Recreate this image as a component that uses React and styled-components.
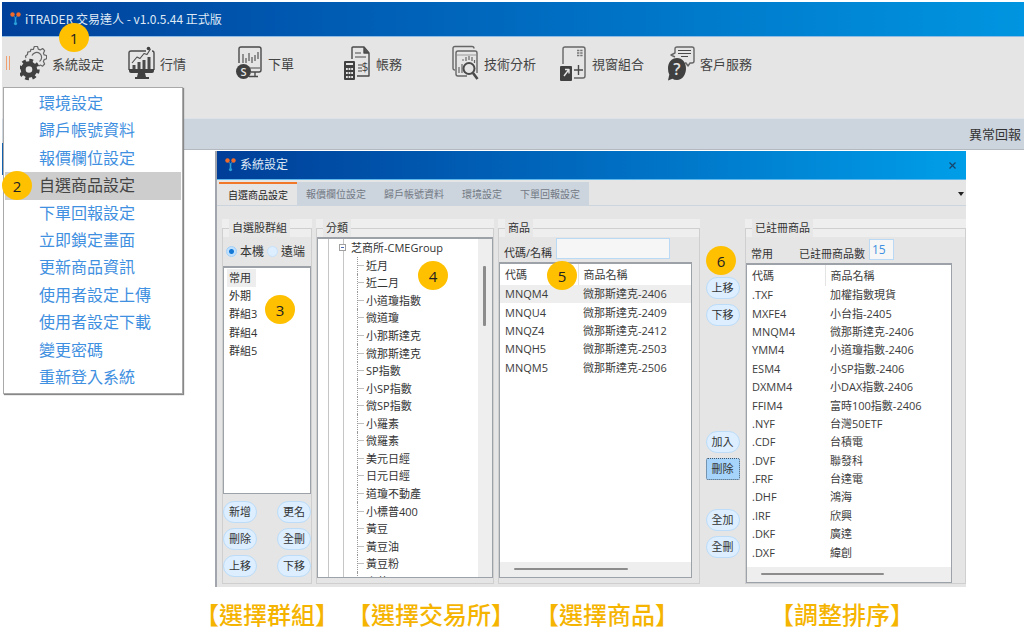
import React from "react";
import styled, { createGlobalStyle } from "styled-components";

const UI = `"Open Sans", "Noto Sans CJK TC", sans-serif`;

const GlobalStyle = createGlobalStyle`
  *, *::before, *::after { box-sizing: border-box; }
  body { margin: 0; background: #fff; color: #333; font: 11px/18px ${UI}; }
  button, input { font: inherit; color: inherit; }
  ul { list-style: none; margin: 0; padding: 0; }
`;

const Page = styled.div`
  position: relative;
  padding: 2px 0 0 2px;
`;

const TitleBar = styled.header`
  display: flex;
  align-items: center;
  gap: 3px;
  height: 35px;
  padding-left: 8px;
  background: linear-gradient(90deg, #00409a, #0066bc 45%, #0095e0);
  border-bottom: 1px solid #8fbce4;
  color: #dfe9f5;
  h1 { margin: 0; font: 400 12px/20px "Noto Sans CJK TC", sans-serif; }
`;

const Toolbar = styled.nav`
  position: relative;
  display: flex;
  height: 81px;
  padding: 8px 0 0 4px;
  background: #e5e5e5;
`;

const Grip = styled.span`
  width: 4px;
  height: 14px;
  margin: 11px 10px 0 0;
  border: solid #f0a070;
  border-width: 0 1px;
`;

const NavButton = styled.button`
  flex: 0 0 108px;
  display: flex;
  align-items: center;
  gap: 5px;
  height: 37px;
  padding: 0;
  border: 0;
  background: none;
  color: #444;
  font: 13px/20px "Noto Sans CJK TC", sans-serif;
  white-space: nowrap;
`;

const StatusBar = styled.div`
  display: flex;
  align-items: center;
  justify-content: flex-end;
  height: 32px;
  padding-right: 3px;
  background: #ccd4de;
  border-top: 1px solid #dde2e8;
  border-bottom: 1px solid #b4b9c0;
  font: 13px/20px "Noto Sans CJK TC", sans-serif;
`;

const Anchor = styled.div`
  position: relative;
`;

const Badge = styled.span`
  position: absolute;
  z-index: 5;
  left: ${(p) => p.$x}px;
  top: ${(p) => p.$y}px;
  display: grid;
  place-items: center;
  width: 30px;
  height: 29px;
  border-radius: 50%;
  background: #ffc000;
  color: #222;
  font: 15px/20px "Open Sans", sans-serif;
`;

const BackWindow = styled.div`
  position: absolute;
  left: 2px;
  top: 143px;
  width: 182px;
  height: 32px;
  background: #1260ae;
`;

const Menu = styled.ul`
  position: absolute;
  z-index: 3;
  left: 3px;
  top: 87px;
  display: grid;
  grid-auto-rows: 1fr;
  width: 180px;
  height: 307px;
  padding: 2px 1px 1px;
  background: #fff;
  border: 1px solid #a9a9a9;
  box-shadow: 1px 1px 1px #888;
`;

const MenuItem = styled.button`
  width: 100%;
  height: 100%;
  padding: 0 0 4px 34px;
  border: 0;
  text-align: left;
  font: 16px/20px "Noto Sans CJK TC", sans-serif;
  background: ${(p) => (p.$active ? "#cdcdcd" : "transparent")};
  color: ${(p) => (p.$active ? "#444" : "#3f90e0")};
`;

const Dialog = styled.section`
  margin: 1px 58px 0 213px;
  border-left: 2px solid #a2a6ac;
  background: #e5e5e5;
`;

const DialogTitle = styled.header`
  display: flex;
  align-items: center;
  gap: 3px;
  height: 29px;
  padding: 0 8px;
  background: linear-gradient(90deg, #003e98, #0070c4 55%, #009ee8);
  border-bottom: 1px solid #5db8ee;
  color: #dfe9f5;
  h2 { flex: 1; margin: 0; font: 400 12px/18px ${UI}; }
`;

const Close = styled.button`
  width: 12px;
  height: 16px;
  padding: 0;
  border: 0;
  background: none;
  color: #17466c;
  display: grid;
  place-items: center;
`;

const Tabs = styled.div`
  display: flex;
  align-items: stretch;
  height: 26px;
  padding: 2px 0 0 2px;
  border-bottom: 1px solid #ccd4de;
`;

const Tab = styled.button`
  flex: 0 0 auto;
  padding: ${(p) => (p.$active ? "0 9px" : "1px 9px 0")};
  border: 0;
  border-top: ${(p) => (p.$active ? "2px solid #f07828" : "0")};
  background: ${(p) => (p.$active ? "#e5e5e5" : "#ccd4de")};
  color: ${(p) => (p.$active ? "#222" : "#737a84")};
  font-size: 10px;
  line-height: 20px;
`;

const TabMenu = styled.button`
  width: 10px;
  margin-left: auto;
  padding: 0;
  border: 0;
  background: none;
  display: grid;
  place-items: center;
`;

const Columns = styled.div`
  display: grid;
  grid-template-columns: 90px minmax(0, 178fr) minmax(0, 202fr) 37px minmax(0, 221fr);
  gap: 4px;
  padding: 13px 0 3px 5px;
`;

const Panel = styled.div`
  background: linear-gradient(#eeeeee 18px, #e5e5e5 18px);
`;

const Group = styled.fieldset`
  height: 100%;
  min-width: 0;
  margin: 0;
  padding: 0;
  border: 1px solid #cfcfcf;
`;

const Legend = styled.legend`
  height: 18px;
  margin-left: 6px;
  padding: 0 3px;
  background: #e7e7e7;
`;

const Sunken = styled.div`
  position: relative;
  height: ${(p) => p.$h}px;
  margin-right: ${(p) => p.$gap || 0}px;
  overflow: hidden;
  background: #fff;
  border: 1px solid #9da1a8;
  border-top-width: 2px;
`;

const RadioRow = styled.div`
  display: flex;
  align-items: center;
  gap: 3px;
  height: 29px;
  padding-left: 3px;
  label { display: flex; align-items: center; gap: 3px; font-size: 12px; white-space: nowrap; }
`;

const Radio = styled.input`
  appearance: none;
  width: 11px;
  height: 11px;
  margin: 0;
  border-radius: 50%;
  border: 1px solid #a3d0f7;
  background: radial-gradient(circle, #1478d4 2px, #bfe0ff 3px);
  &:not(:checked) { background: #dceeff; border-color: #c8e2fa; }
`;

const GroupList = styled.ul`
  display: grid;
  grid-auto-rows: 1fr;
  height: 92px;
  padding-top: 1px;
`;

const GroupItem = styled.li`
  width: max-content;
  margin-left: 3px;
  padding: 0 5px 0 2px;
  background: ${(p) => (p.$active ? "#eeeeee" : "transparent")};
`;

const ButtonGrid = styled.div`
  display: grid;
  grid-template-columns: 34px 34px;
  justify-content: space-between;
  gap: 5px;
  padding: 7px 0 6px;
`;

const Pill = styled.button`
  width: 34px;
  height: 22px;
  padding: 0;
  border: 1px solid #bcdcf8;
  border-radius: 11px;
  background: #dceeff;
  line-height: 18px;
  ${(p) => p.$focused && `
    border: 1px dotted #456;
    border-radius: 2px;
    background: #a6d4fb;
  `}
`;

const PillColumn = styled.div`
  position: relative;
  display: flex;
  flex-direction: column;
  align-items: center;
  gap: 5px;
  padding-top: 58px;
`;

const Spacer = styled.div`
  height: ${(p) => p.$h}px;
`;

const Tree = styled.ul`
  display: grid;
  grid-auto-rows: 1fr;
  height: 351px;
  line-height: 17px;
  background:
    linear-gradient(#c6c6c6, #c6c6c6) 10px 0 / 1px 100% no-repeat,
    linear-gradient(#c6c6c6, #c6c6c6) 25px 0 / 1px 100% no-repeat;
`;

const TreeRoot = styled.li`
  display: flex;
  align-items: center;
  gap: 5px;
  padding-left: 21px;
`;

const Expander = styled.span`
  display: grid;
  place-items: center;
  width: 7px;
  height: 7px;
  border: 1px solid #a0a0a0;
  background: #fff;
  &::before { content: ""; width: 3px; height: 1px; background: #4a68b0; }
`;

const TreeLeaf = styled.li`
  display: flex;
  align-items: center;
  gap: 2px;
  margin-left: 39px;
  border-left: 1px dotted #999;
  &::before { content: ""; width: 6px; height: 1px; background: #c0c0c0; }
`;

const ScrollTrackV = styled.div`
  position: absolute;
  inset: 0 0 0 auto;
  width: 14px;
  padding: 27px 5px;
  background: #eee;
  &::before { content: ""; display: block; width: 3px; height: 60px; border-radius: 1px; background: #8c8c8c; }
`;

const ScrollTrackH = styled.div`
  position: absolute;
  inset: auto 0 0 0;
  height: 15px;
  padding: 6px 14px;
  background: #eee;
  &::before { content: ""; display: block; width: 70%; height: 2px; border-radius: 1px; background: #8c8c8c; }
`;

const FieldRow = styled.div`
  display: flex;
  align-items: flex-end;
  gap: 4px;
  height: ${(p) => p.$h}px;
  padding: 0 0 0 5px;
  white-space: nowrap;
`;

const Field = styled.input`
  width: ${(p) => p.$w}px;
  height: 21px;
  margin-bottom: 3px;
  padding: 0 2px;
  border: 1px solid #b9d9f4;
  background: #f6f6f6;
  color: #3f90e0;
  font-size: 12px;
`;

const CountLabel = styled.label`
  margin-left: 22px;
`;

const DataTable = styled.table`
  width: 100%;
  height: ${(p) => p.$h}px;
  border-collapse: collapse;
  table-layout: fixed;
  color: #3c3c3c;
  th, td { padding: 0 0 0 5px; text-align: left; font-weight: 400; white-space: nowrap; line-height: 18px; }
  th { height: 21px; }
  th:first-child { width: 78px; border-right: 1px solid #e4e4e4; }
  tbody tr[aria-selected="true"] { background: #eeeeee; }
`;

const Captions = styled.div`
  display: grid;
  grid-template-columns: 152px 188px 235px auto;
  padding: 12px 0 0 193px;
  color: #f5b400;
  font: 500 24px/30px "BiauKai", "DFKai-SB", "KaiTi", "Noto Sans CJK TC", serif;
  white-space: nowrap;
`;

const Svg = styled.svg`
  flex: none;
  display: block;
`;

const Logo = () => (
  <Svg width="12" height="16" viewBox="0 0 12 16" aria-hidden="true">
    <path d="M3 4 5.500 7 8 4" stroke="#2a90cc" fill="none" />
    <path d="M5.500 6.500v5" stroke="#2aa0d8" strokeWidth="1.600" />
    <circle cx="2.500" cy="3.500" r="2.200" fill="#f06a2a" />
    <circle cx="8.500" cy="3.500" r="2.200" fill="#f06a2a" />
    <circle cx="5.500" cy="12.600" r="1.600" fill="#2aa0d8" />
  </Svg>
);

const Icon = ({ children }) => (
  <Svg width="27" height="37" viewBox="0 0 27 37" fill="none" stroke="#4a4a4a" strokeWidth="1.4" strokeLinejoin="round" aria-hidden="true">
    {children}
  </Svg>
);

const GearIcon = () => (
  <Icon>
    <path d="M6 13l-.5-2 2-1.500.2-2.300 2.600-.7L11 4.300l2.300.2L14.300 1.500h3.200l.8 2.600 2 .8 2.300-1.400 2 2.200-1.200 2.500.8 1.700 2.400.6v3.200l-2.400.9-.8 1.900 1.200 2.500-2 2.200-2.200-1.200-1.600.9" stroke="#666" strokeWidth="1.200" />
    <path d="M12 10.500a5 5 0 1 1 7.500 6" stroke="#666" strokeWidth="1.200" />
    <circle cx="9" cy="24.500" r="5.800" strokeWidth="5" stroke="#404040" />
    <circle cx="9" cy="24.500" r="9" strokeWidth="3.400" stroke="#404040" strokeDasharray="3.700 3.370" />
  </Icon>
);

const QuoteIcon = () => (
  <Icon>
    <path d="M18 6H3Q1 6 1 8v17M24 6q2 0 2 2v17" />
    <path d="M1 24h25v2q0 2-2 2H3q-2 0-2-2zM10 28h7l1 4h3v2H7v-2h2z" fill="#404040" stroke="none" />
    <path d="M6 24v-4M11 24v-7M16 24v-9M21 24V12" strokeWidth="3" />
    <path d="M4 18 9 12l3 1.500 4-5 3 1 3.500-5.500" strokeWidth="1.100" />
    <circle cx="20.500" cy="3.500" r="1.800" fill="#404040" stroke="none" />
  </Icon>
);

const OrderIcon = () => (
  <Icon>
    <path d="M3 18V4q0-2 2-2h18q2 0 2 2v21q0 2-2 2h-8" />
    <path d="M7 9v9M10 13v5M13 8v8M16 12v6M19 10v6M22 7v7" strokeWidth="1.100" />
    <path d="M12 23h12" strokeWidth="1" />
    <path d="M19 27v4M13 31.500h9" />
    <circle cx="7.500" cy="26.500" r="7.500" fill="#404040" stroke="none" />
    <text x="7.500" y="30.500" fill="#e5e5e5" stroke="none" fontSize="11" fontFamily="Open Sans" fontWeight="600" textAnchor="middle">S</text>
  </Icon>
);

const AccountIcon = () => (
  <Icon>
    <path d="M8 14V3q0-1 1-1h11l5 6v23H13" />
    <path d="M20 2v6h5" fill="#555" />
    <path d="M11 8h6M11 12h11M14 20h4M14 23h4M14 26h4" strokeWidth="1.200" />
    <text x="21" y="27" fill="#4a4a4a" stroke="none" fontSize="12" fontFamily="Open Sans" textAnchor="middle">$</text>
    <rect x="0" y="16" width="11" height="19" rx="1" fill="#404040" stroke="none" />
    <path d="M2 19h7" stroke="#e5e5e5" strokeWidth="2" />
    <path d="M2 24h7M2 28h7M2 32h7" stroke="#e5e5e5" strokeWidth="2" strokeDasharray="1.800 .8" />
  </Icon>
);

const AnalysisIcon = () => (
  <Icon>
    <path d="M3 25q-2 0-2-2V3.500q0-2 2-2h17q2 0 2 2" stroke="#666" />
    <path d="M15 31H6q-2 0-2-2V8q0-2 2-2h17q2 0 2 2v20" stroke="#666" />
    <path d="M4 10h21" strokeWidth=".8" stroke="#888" />
    <path d="M7 28v-6M10 28v-9M12.500 28v-4M10 15h2M14 12v4M17 11v4M20 12v4M22.500 15v3" stroke="#666" strokeWidth="1.200" />
    <circle cx="17" cy="23.500" r="5.500" strokeWidth="2" fill="#e5e5e5" />
    <path d="M21 28l4.500 6" strokeWidth="2.600" />
  </Icon>
);

const WindowIcon = () => (
  <Icon>
    <path d="M3 19V4q0-2 2-2h18q2 0 2 2v27q0 2-2 2h-9" stroke="#666" />
    <path d="M17 5.500h6M17 8h6M17 10.500h6" strokeWidth="1.500" strokeDasharray="2.400 .8" stroke="#777" />
    <rect x="0" y="21" width="12" height="15" rx="1" fill="#404040" stroke="none" />
    <path d="M4 31l4.500-6M5 24.500h4v4" stroke="#e5e5e5" />
    <path d="M18.500 20v10M14 25h9" />
  </Icon>
);

const ServiceIcon = () => (
  <Icon>
    <path d="M7 12 3 10l4-2V4q0-2 2-2h15q2 0 2 2v12q0 2-2 2h-2l-2 3-2-3h-1" stroke="#666" />
    <path d="M10 5.500h13M10 8.500h13M13 11.500h7" strokeWidth="1.200" />
    <path d="M9 13c5.500 0 9 4.500 9 10.500S14.500 35 9 35q-3 0-4.500-1.200L0 35.500l1.300-6Q0 27 0 23.500C0 17.500 3.500 13 9 13z" fill="#404040" stroke="none" />
    <text x="9" y="30" fill="#e5e5e5" stroke="none" fontSize="16" fontFamily="Open Sans" fontWeight="600" textAnchor="middle">?</text>
  </Icon>
);

const NAV = [
  ["系統設定", GearIcon],
  ["行情", QuoteIcon],
  ["下單", OrderIcon],
  ["帳務", AccountIcon],
  ["技術分析", AnalysisIcon],
  ["視窗組合", WindowIcon],
  ["客戶服務", ServiceIcon],
];

const MENU = [
  "環境設定", "歸戶帳號資料", "報價欄位設定", "自選商品設定", "下單回報設定", "立即鎖定畫面",
  "更新商品資訊", "使用者設定上傳", "使用者設定下載", "變更密碼", "重新登入系統",
];

const TABS = ["自選商品設定", "報價欄位設定", "歸戶帳號資料", "環境設定", "下單回報設定"];

const GROUPS = ["常用", "外期", "群組3", "群組4", "群組5"];

const TREE = [
  "近月", "近二月", "小道瓊指數", "微道瓊", "小那斯達克", "微那斯達克", "SP指數", "小SP指數", "微SP指數", "小羅素",
  "微羅素", "美元日經", "日元日經", "道瓊不動產", "小標普400", "黃豆", "黃豆油", "黃豆粉", "小黃豆",
];

const PRODUCTS = [
  ["MNQM4", "微那斯達克-2406"],
  ["MNQU4", "微那斯達克-2409"],
  ["MNQZ4", "微那斯達克-2412"],
  ["MNQH5", "微那斯達克-2503"],
  ["MNQM5", "微那斯達克-2506"],
];

const REGISTERED = [
  [".TXF", "加權指數現貨"],
  ["MXFE4", "小台指-2405"],
  ["MNQM4", "微那斯達克-2406"],
  ["YMM4", "小道瓊指數-2406"],
  ["ESM4", "小SP指數-2406"],
  ["DXMM4", "小DAX指數-2406"],
  ["FFIM4", "富時100指數-2406"],
  [".NYF", "台灣50ETF"],
  [".CDF", "台積電"],
  [".DVF", "聯發科"],
  [".FRF", "台達電"],
  [".DHF", "鴻海"],
  [".IRF", "欣興"],
  [".DKF", "廣達"],
  [".DXF", "緯創"],
];

const Quotes = ({ rows, height, selected }) => (
  <DataTable $h={height}>
    <thead>
      <tr>
        <th scope="col">代碼</th>
        <th scope="col">商品名稱</th>
      </tr>
    </thead>
    <tbody>
      {rows.map(([code, name], i) => (
        <tr key={code} aria-selected={i === selected}>
          <td>{code}</td>
          <td>{name}</td>
        </tr>
      ))}
    </tbody>
  </DataTable>
);

export default function App() {
  return (
    <>
      <GlobalStyle />
      <Page>
        <TitleBar>
          <Logo />
          <h1>iTRADER 交易達人 - v1.0.5.44 正式版</h1>
        </TitleBar>
        <Toolbar>
          <Grip />
          {NAV.map(([label, Glyph]) => (
            <NavButton key={label} type="button">
              <Glyph />
              {label}
            </NavButton>
          ))}
        </Toolbar>
        <StatusBar>異常回報</StatusBar>

        <BackWindow />
        <Menu>
          {MENU.map((label, i) => (
            <li key={label}>
              <MenuItem type="button" $active={i === 3}>{label}</MenuItem>
            </li>
          ))}
        </Menu>
        <Badge $x={59} $y={23}>1</Badge>
        <Badge $x={2} $y={171}>2</Badge>

        <Dialog>
          <DialogTitle>
            <Logo />
            <h2>系統設定</h2>
            <Close type="button" aria-label="關閉">
              <svg width="7" height="7" viewBox="0 0 7 7" stroke="currentColor" strokeWidth="1.200">
                <path d="M.5.5l6 6M6.500.5l-6 6" />
              </svg>
            </Close>
          </DialogTitle>
          <Tabs>
            {TABS.map((label, i) => (
              <Tab key={label} type="button" $active={i === 0}>{label}</Tab>
            ))}
            <TabMenu type="button" aria-label="分頁清單">
              <svg width="6" height="4" viewBox="0 0 6 4"><path d="M0 0h6L3 4z" fill="#222" /></svg>
            </TabMenu>
          </Tabs>
          <Columns>
            <Panel>
              <Group>
                <Legend>自選股群組</Legend>
                <RadioRow>
                  <label><Radio type="radio" name="place" defaultChecked />本機</label>
                  <label><Radio type="radio" name="place" />遠端</label>
                </RadioRow>
                <Anchor>
                  <Sunken $h={228}>
                    <GroupList>
                      {GROUPS.map((g, i) => <GroupItem key={g} $active={i === 0}>{g}</GroupItem>)}
                    </GroupList>
                  </Sunken>
                  <Badge $x={42} $y={29}>3</Badge>
                </Anchor>
                <ButtonGrid>
                  {["新增", "更名", "刪除", "全刪", "上移", "下移"].map((b) => <Pill key={b} type="button">{b}</Pill>)}
                </ButtonGrid>
              </Group>
            </Panel>

            <Panel>
              <Group>
                <Legend>分類</Legend>
                <Anchor>
                  <Sunken $h={341}>
                    <Tree>
                      <TreeRoot><Expander />芝商所-CMEGroup</TreeRoot>
                      {TREE.map((t) => <TreeLeaf key={t}>{t}</TreeLeaf>)}
                    </Tree>
                    <ScrollTrackV />
                  </Sunken>
                  <Badge $x={101} $y={24}>4</Badge>
                </Anchor>
              </Group>
            </Panel>

            <Panel>
              <Group>
                <Legend>商品</Legend>
                <FieldRow $h={25}>
                  <label htmlFor="query">代碼/名稱</label>
                  <Field id="query" $w={114} />
                </FieldRow>
                <Anchor>
                  <Sunken $h={316} $gap={7}>
                    <Quotes rows={PRODUCTS} height={113} selected={0} />
                    <ScrollTrackH />
                  </Sunken>
                  <Badge $x={48} $y={-1}>5</Badge>
                </Anchor>
              </Group>
            </Panel>

            <PillColumn>
              <Badge $x={2} $y={27}>6</Badge>
              <Pill type="button">上移</Pill>
              <Pill type="button">下移</Pill>
              <Spacer $h={95} />
              <Pill type="button">加入</Pill>
              <Pill type="button" $focused>刪除</Pill>
              <Spacer $h={19} />
              <Pill type="button">全加</Pill>
              <Pill type="button">全刪</Pill>
            </PillColumn>

            <Panel>
              <Group>
                <Legend>已註冊商品</Legend>
                <FieldRow $h={26}>
                  <span>常用</span>
                  <CountLabel htmlFor="count">已註冊商品數</CountLabel>
                  <Field id="count" $w={25} defaultValue="15" />
                </FieldRow>
                <Sunken $h={320} $gap={13}>
                  <Quotes rows={REGISTERED} height={297} />
                  <ScrollTrackH />
                </Sunken>
              </Group>
            </Panel>
          </Columns>
        </Dialog>

        <Captions>
          <span>【選擇群組】</span>
          <span>【選擇交易所】</span>
          <span>【選擇商品】</span>
          <span>【調整排序】</span>
        </Captions>
      </Page>
    </>
  );
}
